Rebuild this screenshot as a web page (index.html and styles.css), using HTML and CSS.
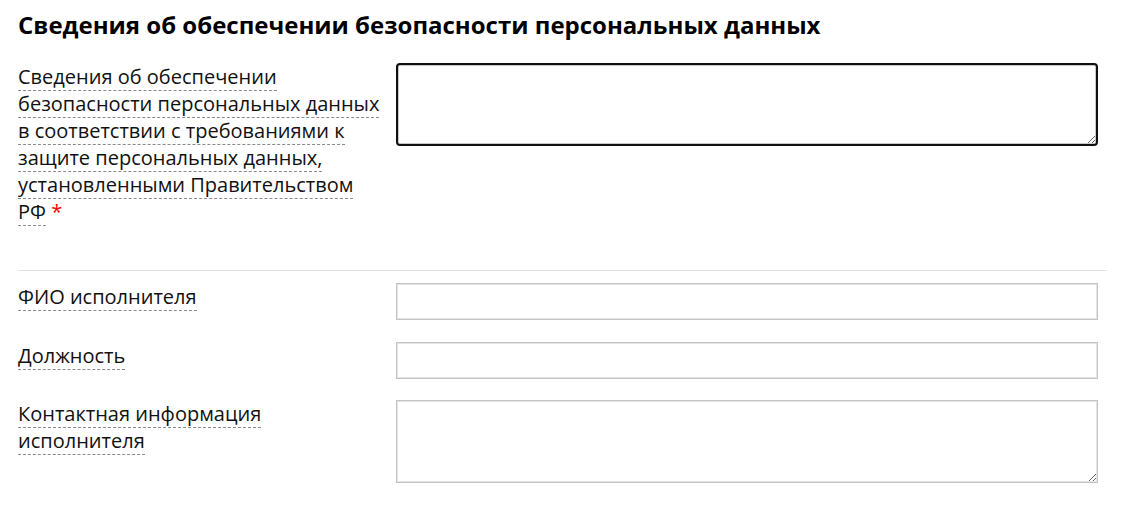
FILE: index.html
```html
<!DOCTYPE html>
<html lang="ru">
<head>
<meta charset="utf-8">
<title>Сведения об обеспечении безопасности персональных данных</title>
<link rel="stylesheet" href="styles.css">
</head>
<body>
<main class="form">
  <h2 class="form__title">Сведения об обеспечении безопасности персональных данных</h2>

  <div class="field">
    <label class="field__label" for="f1"><span class="field__text">Сведения об обеспечении безопасности персональных данных в соответствии с требованиями к защите персональных данных, установленными Правительством РФ</span> <span class="field__req">*</span></label>
    <textarea id="f1" class="field__control field__control--area field__control--active"></textarea>
  </div>

  <hr class="form__divider">

  <div class="field">
    <label class="field__label" for="f2"><span class="field__text">ФИО исполнителя</span></label>
    <input id="f2" type="text" class="field__control field__control--input">
  </div>

  <div class="field">
    <label class="field__label" for="f3"><span class="field__text">Должность</span></label>
    <input id="f3" type="text" class="field__control field__control--input">
  </div>

  <div class="field">
    <label class="field__label" for="f4"><span class="field__text">Контактная информация исполнителя</span></label>
    <textarea id="f4" class="field__control field__control--area"></textarea>
  </div>
</main>
</body>
</html>
```

FILE: styles.css
```css
html, body {
  margin: 0;
  padding: 0;
  background: #ffffff;
}

body {
  font-family: "Open Sans", "Noto Sans", sans-serif;
  color: #111111;
}

.form {
  padding: 10px 20px 0 18px;
}

.form__title {
  margin: 0 0 23px 0;
  font-size: 24px;
  line-height: 30px;
  font-weight: 700;
  color: #000000;
}

.field {
  display: grid;
  grid-template-columns: 378px 702px;
  align-items: start;
  margin-bottom: 21.5px;
}

.field__label {
  display: block;
  width: 364px;
  font-size: 20px;
  line-height: 27px;
  color: #111111;
}

.field__text {
  border-bottom: 1px dashed #8a8a8a;
}

.field__req {
  color: #ff0000;
}

.field__control {
  box-sizing: border-box;
  width: 702px;
  margin: 0;
  display: block;
  font-family: inherit;
  font-size: 16px;
  background: #ffffff;
  border: 1px solid #c4c4c4;
  box-shadow: inset 0 0 0 1px #e4e4e4;
  border-radius: 0;
  outline: none;
}

.field__control--input {
  height: 37px;
  padding: 4px 8px;
}

.field__control--area {
  height: 83px;
  padding: 6px 8px;
  resize: vertical;
}

.field__control--active {
  border: 2px solid #101010;
  border-radius: 4px;
  box-shadow: inset 0 0 0 1px #c8c8c8;
}

.form__divider {
  margin: 45px 0 12px 0;
  border: 0;
  border-top: 1px solid #e2e2e2;
  height: 0;
}
```
